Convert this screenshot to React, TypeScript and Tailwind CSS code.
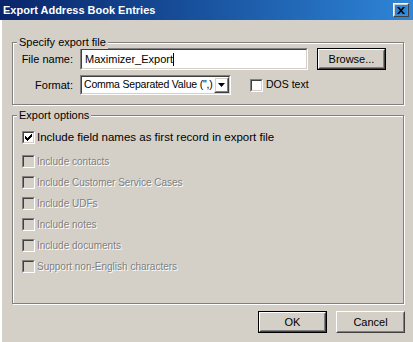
import React from "react";

const font = { fontFamily: '"Liberation Sans", Arial, sans-serif' };

function Sunken({ className = "", children }: { className?: string; children?: React.ReactNode }) {
  return (
    <div className={`border border-t-[#808080] border-l-[#808080] border-b-white border-r-white ${className}`}>
      <div className="h-full w-full border border-t-[#404040] border-l-[#404040] border-b-[#d4d0c8] border-r-[#d4d0c8] bg-white flex items-center">
        {children}
      </div>
    </div>
  );
}

function Raised({ className = "", children, def = false }: { className?: string; children?: React.ReactNode; def?: boolean }) {
  const inner = (
    <div className="h-full w-full border border-t-white border-l-white border-b-[#404040] border-r-[#404040]">
      <div className="h-full w-full border border-t-[#d4d0c8] border-l-[#d4d0c8] border-b-[#808080] border-r-[#808080] flex items-center justify-center text-[11px] text-black">
        {children}
      </div>
    </div>
  );
  return def ? (
    <div className={`border border-black ${className}`}>{inner}</div>
  ) : (
    <div className={className}>{inner}</div>
  );
}

function CheckBox({ checked = false, disabled = false }: { checked?: boolean; disabled?: boolean }) {
  return (
    <div className="w-[13px] h-[13px] shrink-0 border border-t-[#808080] border-l-[#808080] border-b-white border-r-white">
      <div
        className={`h-full w-full border border-t-[#404040] border-l-[#404040] border-b-[#d4d0c8] border-r-[#d4d0c8] ${
          disabled ? "bg-[#d4d0c8]" : "bg-white"
        } flex items-center justify-center`}
      >
        {checked && (
          <svg width="7" height="7" viewBox="0 0 7 7">
            <path d="M0 2h1v1h1v1h1v-1h1v-1h1v-1h1v-1h1v3h-1v1h-1v1h-1v1h-1v1h-1v-1h-1v-1h-1z" fill="#000" />
          </svg>
        )}
      </div>
    </div>
  );
}

function Group({ label, className = "", children }: { label: string; className?: string; children?: React.ReactNode }) {
  return (
    <div className={`relative border border-[#808080] shadow-[1px_1px_0_#fff,inset_1px_1px_0_#fff] ${className}`}>
      <span className="absolute left-[4px] top-[-8px] bg-[#d4d0c8] px-[2px] text-[11px] leading-[14px] text-black">
        {label}
      </span>
      {children}
    </div>
  );
}

const options = [
  "Include contacts",
  "Include Customer Service Cases",
  "Include UDFs",
  "Include notes",
  "Include documents",
  "Support non-English characters",
];

export default function App() {
  return (
    <div className="w-[413px] h-[342px] bg-[#d4d0c8] flex flex-col overflow-hidden" style={font}>
      <div className="h-[20px] shrink-0 flex items-center justify-between bg-gradient-to-r from-[#0a246a] to-[#2f86d8] pl-[3px] pr-[4px]">
        <span className="text-white font-bold text-[11px] leading-[14px]">Export Address Book Entries</span>
        <Raised className="w-[16px] h-[14px]">
          <svg width="8" height="7" viewBox="0 0 8 7">
            <path d="M0 0h2l2 2.2L6 0h2L5 3.5 8 7H6L4 4.8 2 7H0l3-3.5z" fill="#000" />
          </svg>
        </Raised>
      </div>
      <div className="flex-1 flex flex-col pl-[12px] pr-[9px] border-l-2 border-l-white">
        <Group label="Specify export file" className="mt-[22px] h-[63px] -ml-[2px]">
          <div className="flex flex-col pt-[5px] gap-[5px]">
            <div className="flex items-center">
              <span className="w-[60px] shrink-0 text-right text-[11px] text-black">File name:</span>
              <Sunken className="ml-[7px] w-[228px] h-[22px] shrink-0">
                <span className="pl-[3px] text-[11px] text-black">Maximizer_Export</span>
                <span className="w-px h-[13px] bg-black" />
              </Sunken>
              <Raised def className="ml-[9px] w-[69px] h-[22px] shrink-0">Browse...</Raised>
            </div>
            <div className="flex items-center">
              <span className="w-[60px] shrink-0 text-right text-[11px] text-black">Format:</span>
              <Sunken className="ml-[7px] w-[151px] h-[20px] shrink-0">
                <span className="flex-1 pl-[2px] text-[10.5px] tracking-[-0.2px] text-black whitespace-nowrap overflow-hidden">
                  Comma Separated Value (",)
                </span>
                <Raised className="w-[15px] h-full shrink-0">
                  <svg width="7" height="4" viewBox="0 0 7 4">
                    <path d="M0 0h7L3.5 4z" fill="#000" />
                  </svg>
                </Raised>
              </Sunken>
              <div className="ml-[19px] flex items-center gap-[3px]">
                <CheckBox />
                <span className="text-[10.5px] text-black">DOS text</span>
              </div>
            </div>
          </div>
        </Group>
        <Group label="Export options" className="mt-[10px] h-[189px] -ml-[2px]">
          <div className="flex flex-col pt-[15px] pl-[9px]">
            <div className="flex items-center gap-[2px] h-[13px]">
              <CheckBox checked />
              <span className="text-[11.5px] text-black leading-[13px]">
                Include field names as first record in export file
              </span>
            </div>
            <div className="flex flex-col gap-[8px] mt-[11px]">
              {options.map((o) => (
                <div key={o} className="flex items-center gap-[2px] h-[13px]">
                  <CheckBox disabled />
                  <span className="text-[10px] leading-[13px] text-[#808080] [text-shadow:1px_1px_0_#fff]">{o}</span>
                </div>
              ))}
            </div>
          </div>
        </Group>
        <div className="flex justify-end gap-[9px] mt-[7px] -mr-[1px]">
          <Raised def className="w-[69px] h-[22px]">OK</Raised>
          <Raised className="w-[69px] h-[22px]">Cancel</Raised>
        </div>
      </div>
    </div>
  );
}
